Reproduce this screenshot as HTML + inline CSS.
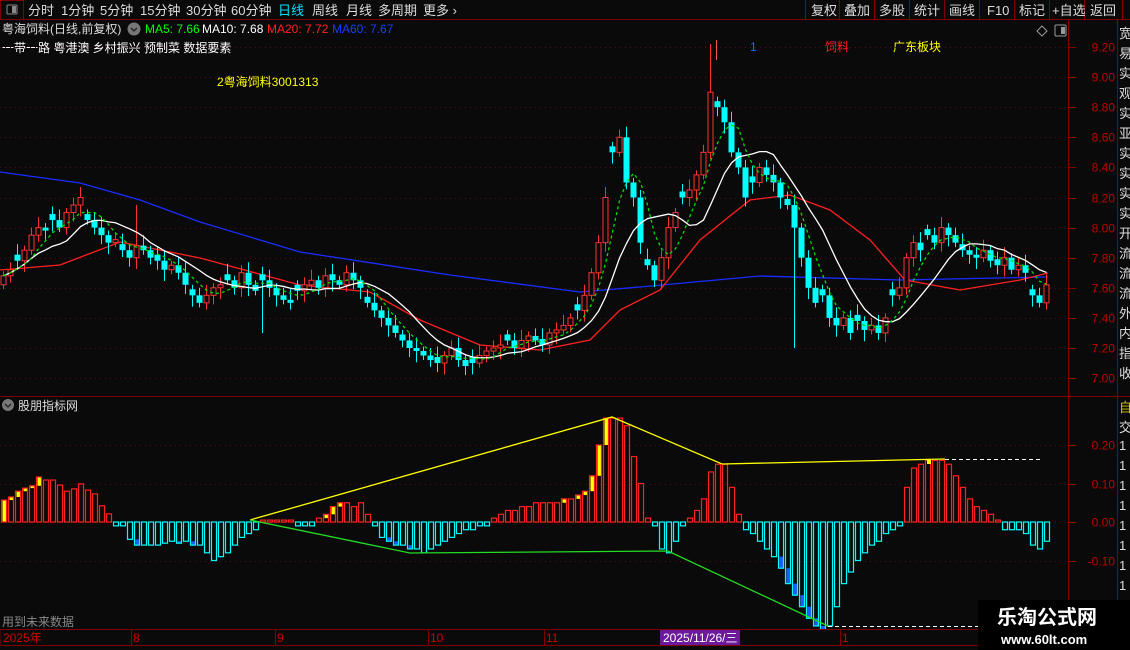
<!DOCTYPE html>
<html><head><meta charset="utf-8"><style>
html,body{margin:0;padding:0;background:#0a0a0a;width:1130px;height:650px;overflow:hidden}
svg{display:block}
text{font-family:"Liberation Sans","Noto Sans CJK SC",sans-serif}
</style></head><body>
<svg id="s" width="1130" height="650" xmlns="http://www.w3.org/2000/svg">
<rect width="1130" height="650" fill="#0a0a0a"/>
<line x1="0" y1="19.5" x2="1130" y2="19.5" stroke="#800000"/>
<rect x="0.5" y="0.5" width="23" height="19" fill="none" stroke="#800000"/>
<rect x="7" y="5" width="10" height="9" fill="none" stroke="#888" rx="1"/><rect x="12" y="6" width="4" height="7" fill="#888"/>
<g font-size="13" fill="#ddd">
<text x="28" y="15">分时</text><text x="61" y="15">1分钟</text><text x="100" y="15">5分钟</text>
<text x="140" y="15">15分钟</text><text x="186" y="15">30分钟</text><text x="231" y="15">60分钟</text>
<text x="278" y="15" fill="#00e0ff">日线</text><text x="312" y="15">周线</text><text x="346" y="15">月线</text>
<text x="378" y="15">多周期</text><text x="423" y="15">更多 ›</text>
</g>
<g stroke="#800000"><line x1="805.5" y1="0" x2="805.5" y2="20"/><line x1="839.5" y1="0" x2="839.5" y2="20"/><line x1="874.5" y1="0" x2="874.5" y2="20"/><line x1="909.5" y1="0" x2="909.5" y2="20"/><line x1="944.5" y1="0" x2="944.5" y2="20"/><line x1="979.5" y1="0" x2="979.5" y2="20"/><line x1="1014.5" y1="0" x2="1014.5" y2="20"/><line x1="1049.5" y1="0" x2="1049.5" y2="20"/><line x1="1084.5" y1="0" x2="1084.5" y2="20"/><line x1="1122.5" y1="0" x2="1122.5" y2="20"/></g>
<g font-size="13" fill="#ddd"><text x="811" y="15">复权</text><text x="844" y="15">叠加</text><text x="879" y="15">多股</text><text x="914" y="15">统计</text><text x="949" y="15">画线</text><text x="987" y="15">F10</text><text x="1019" y="15">标记</text><text x="1052" y="15">+自选</text><text x="1090" y="15">返回</text></g>
<g font-size="12"><text x="2" y="33" fill="#ddd">粤海饲料(日线,前复权)</text>
<circle cx="134" cy="29" r="6.5" fill="#777"/><path d="M131 28l3 3 3-3" stroke="#222" fill="none" stroke-width="1.3"/>
<text x="145" y="33" fill="#00ff00">MA5: 7.66</text><text x="202" y="33" fill="#fff">MA10: 7.68</text>
<text x="267" y="33" fill="#ff2020">MA20: 7.72</text><text x="332" y="33" fill="#1a3cff">MA60: 7.67</text>
<text x="2" y="52" fill="#fff">一带一路 粤港澳 乡村振兴 预制菜 数据要素</text>
<text x="217" y="86" fill="#ffff00">2粤海饲料3001313</text>
<text x="750" y="51" fill="#1a6cff">1</text><text x="825" y="51" fill="#ff2020">饲料</text><text x="893" y="51" fill="#ffff00">广东板块</text></g>
<line x1="716.5" y1="40" x2="716.5" y2="60" stroke="#ff5050"/>
<path d="M1042 26l5 5-5 5-5-5z" fill="none" stroke="#999"/>
<rect x="1055" y="25" width="11" height="11" fill="none" stroke="#999" rx="1"/><rect x="1061" y="27" width="4" height="7" fill="#999"/>
<line x1="1068.5" y1="20" x2="1068.5" y2="629" stroke="#800000"/>
<line x1="1117.5" y1="20" x2="1117.5" y2="629" stroke="#800000"/>
<line x1="0" y1="396.5" x2="1130" y2="396.5" stroke="#800000"/>
<g id="g"></g>
<circle cx="8" cy="405" r="6" fill="#777"/><path d="M5 404l3 3 3-3" stroke="#222" fill="none" stroke-width="1.3"/>
<text x="18" y="410" font-size="12" fill="#ddd">股朋指标网</text>
<text x="2" y="626" font-size="12" fill="#888">用到未来数据</text>
<rect x="0" y="629.5" width="1130" height="16" fill="#0a0a0a" stroke="#800000"/>
<g font-size="12" fill="#cc0000"><text x="3" y="642">2025年</text><text x="133" y="642">8</text><text x="277" y="642">9</text><text x="430" y="642">10</text><text x="546" y="642">11</text><text x="842" y="642">1</text></g>
<g stroke="#800000"><line x1="131.5" y1="630" x2="131.5" y2="645"/><line x1="275.5" y1="630" x2="275.5" y2="645"/><line x1="428.5" y1="630" x2="428.5" y2="645"/><line x1="544.5" y1="630" x2="544.5" y2="645"/><line x1="840.5" y1="630" x2="840.5" y2="645"/></g>
<rect x="660" y="630" width="80" height="15" fill="#6a1a9a"/><text x="663" y="642" font-size="12" fill="#fff">2025/11/26/三</text>
<g font-size="13" fill="#ddd"><text x="1119" y="38">宽</text><text x="1119" y="58">易</text><text x="1119" y="78">实</text><text x="1119" y="98">观</text><text x="1119" y="118">实</text><text x="1119" y="138">亚</text><text x="1119" y="158">实</text><text x="1119" y="178">实</text><text x="1119" y="198">实</text><text x="1119" y="218">实</text><text x="1119" y="238">开</text><text x="1119" y="258">流</text><text x="1119" y="278">流</text><text x="1119" y="298">流</text><text x="1119" y="318">外</text><text x="1119" y="338">内</text><text x="1119" y="358">指</text><text x="1119" y="378">收</text>
<text x="1119" y="412" fill="#cccc00">自</text><text x="1119" y="432">交</text>
<text x="1119" y="450">1</text><text x="1119" y="470">1</text><text x="1119" y="490">1</text><text x="1119" y="510">1</text><text x="1119" y="530">1</text><text x="1119" y="550">1</text><text x="1119" y="570">1</text><text x="1119" y="590">1</text><text x="1119" y="610">1</text></g>
<rect x="978" y="600" width="152" height="50" fill="#000"/>
<text x="997" y="624" font-size="20" font-weight="bold" fill="#fff" font-family="Liberation Serif,Noto Serif CJK SC,serif">乐淘公式网</text>
<text x="1001" y="644" font-size="13" font-weight="bold" fill="#fff" font-family="Liberation Serif,serif">www.60lt.com</text>
</svg>
<script>
var NS="http://www.w3.org/2000/svg",g=document.getElementById("g");
function el(t,a){var e=document.createElementNS(NS,t);for(var k in a)e.setAttribute(k,a[k]);g.appendChild(e);return e}
function py(p){return 47+(9.2-p)*150.5}
function hy(v){return 522-v*385}
var labs=[9.2,9,8.8,8.6,8.4,8.2,8,7.8,7.6,7.4,7.2,7];
labs.forEach(function(p){var y=Math.round(py(p))+.5;el("line",{x1:0,y1:y,x2:1068,y2:y,stroke:"#5a1010","stroke-dasharray":"1 4"});el("line",{x1:1068,y1:y,x2:1076,y2:y,stroke:"#800000"});
var t=el("text",{x:1115,y:y+4,"font-size":12,fill:"#c00000","text-anchor":"end"});t.textContent=p.toFixed(2);});
[[0.2,"0.20"],[0.1,"0.10"],[0,"0.00"],[-0.1,"-0.10"]].forEach(function(a){var y=Math.round(hy(a[0]))+.5;el("line",{x1:0,y1:y,x2:1068,y2:y,stroke:"#5a1010","stroke-dasharray":"1 4"});el("line",{x1:1068,y1:y,x2:1076,y2:y,stroke:"#800000"});var t=el("text",{x:1115,y:y+4,"font-size":12,fill:"#c00000","text-anchor":"end"});t.textContent=a[1];});
var c=[7.68,7.72,7.78,7.85, 7.95,8.0,7.98,8.05,8.0,8.1,8.15,8.2, 8.05,8.0,7.95,7.9,7.92,7.85,7.8,7.88, 7.85,7.8,7.78,7.72,7.75,7.7,7.62,7.55,7.5,
7.55,7.6,7.62,7.65,7.6,7.7,7.62,7.58,7.65,7.6,7.55,7.52,7.5,7.58, 7.62,7.65,7.6,7.68,7.65,7.62,7.7,7.65,7.6, 7.5,7.45,7.4,7.35,7.3,7.25,7.2,7.18,7.15,
7.12,7.1,7.15,7.2,7.12,7.08,7.1,7.15,7.18,7.2, 7.22,7.25,7.2,7.25,7.28,7.25,7.22,7.3,7.32,7.35,7.4,7.45, 7.55,7.7,7.9,8.2,8.5,8.6,8.3,8.2,
7.9,7.75,7.65,7.8,8.0,8.1,8.2,8.25, 8.35,8.5,8.9,8.8,8.7,8.5,8.4, 8.2,8.3,8.4,8.35,8.3,8.2,8.15, 8.0,7.8,7.6,7.5,7.55,7.4,7.35,7.4,
7.3,7.38,7.32,7.35,7.3,7.4,7.55,7.6, 7.8,7.9,7.85,7.95,7.9,8.0,7.95,7.9, 7.85,7.82,7.8,7.85,7.78,7.75,7.8,7.72,7.75,7.7,7.55,7.5,7.62];
function poly(pts,col,dash){el("polyline",{points:pts.map(function(p){return p.join(",")}).join(" "),fill:"none",stroke:col,"stroke-width":1.3,"stroke-dasharray":dash||"none"})}
poly([[0,172],[80,183],[140,200],[200,222],[300,252],[450,275],[580,292],[640,287],[760,276],[900,280],[1048,277]],"#1a2cff");
poly([[0,270],[60,265],[120,242],[200,258],[300,285],[370,292],[420,320],[480,345],[540,350],[590,340],[620,310],[660,290],[700,240],[750,200],[790,195],[830,210],[870,240],[905,280],[960,290],[1020,280],[1048,273]],"#ff2020");
function ma(n){var pts=[];for(var i=0;i<c.length;i++){var s=0,k=0;for(var j=Math.max(0,i-n+1);j<=i;j++){s+=c[j];k++}pts.push([3.5+7*i,py(s/k)])}return pts}
for(var i=0;i<c.length;i++){
 var o=i?c[i-1]:7.62,cl=c[i];if(i%5==2)o=cl+0.04;
 var up=cl>=o,hi=Math.max(o,cl)+0.03+(i%3)*0.02,lo=Math.min(o,cl)-0.03-(i%4)*0.015;
 if(i==101)hi=9.22; if(i==19)hi=8.15; if(i==37)lo=7.3; if(i==113)lo=7.2;
 var x=3.5+7*i,col=up?"#ff3232":"#00ffff";
 el("line",{x1:x,y1:py(hi),x2:x,y2:py(lo),stroke:col});
 var yt=py(Math.max(o,cl)),yb=py(Math.min(o,cl));if(yb-yt<1)yb=yt+1;
 if(up)el("rect",{x:x-2.5,y:yt,width:5,height:yb-yt,fill:"#0a0a0a",stroke:col});
 else el("rect",{x:x-3,y:yt,width:6,height:yb-yt,fill:col});
}
poly(ma(10),"#ffffff");poly(ma(5),"#00dd00","3 3");
var h=[.057,.065,.08,.088,.094,.117,.109,.109,.096,.08,.086,.099,.083,.073,.042,.021,
-.01,-.01,-.045,-.06,-.06,-.06,-.06,-.055,-.05,-.055,-.05,-.06,-.06,-.08,-.1,-.09,-.08,-.06,-.04,-.03,-.02,
.005,.005,.005,.005,.005,-.01,-.01,-.01,.01,.02,.04,.05,.05,.04,.05,.02,
-.01,-.04,-.05,-.06,-.06,-.07,-.07,-.08,-.07,-.06,-.05,-.04,-.03,-.02,-.02,-.01,-.01,
.01,.02,.03,.03,.04,.04,.05,.05,.05,.05,.06,.06,.07,.08,
.12,.2,.27,.27,.27,.25,.17,.1,.01, -.01,-.07,-.08,-.05,-.01, .01,.03,.06,.13,.15,.15,.09,.02,
-.02,-.03,-.05,-.07,-.09,-.12,-.16,-.19,-.22,-.25,-.27,-.28,-.27,-.22,-.16,
-.13,-.1,-.08,-.06,-.05,-.03,-.02,-.01, .09,.14,.15,.16,.16,.16,.15,.12,.09,.06,.04, .03,.02,.005,
-.02,-.02,-.02,-.03,-.06,-.07,-.05];
for(var i=0;i<h.length;i++){var v=h[i],p=i?h[i-1]:0,x=1.5+7*i;
 if(v>=0){if(v>p&&p>=0&&(i<6||(i>44&&i<50)||(i>77&&i<87)))el("rect",{x:x+1,y:hy(v),width:4,height:Math.max(1,hy(p)-hy(v)),fill:"#ffff00"});
  el("rect",{x:x,y:hy(v),width:5,height:Math.max(1,hy(0)-hy(v)),fill:"none",stroke:"#ff2020","stroke-width":1.2});}
 else{if(v<p&&p<=0&&((i>18&&i<29)||(i>54&&i<59)||(i>110&&i<118)))el("rect",{x:x+1,y:hy(p),width:4,height:hy(v)-hy(p),fill:"#1a5cff"});
  el("rect",{x:x,y:hy(0),width:5,height:hy(v)-hy(0),fill:"none",stroke:"#00ffff","stroke-width":1.2});}
}
poly([[250,520],[612,417],[722,464],[945,459]],"#ffff00");
poly([[250,520],[410,553],[668,551],[828,626]],"#22dd22");
el("line",{x1:945,y1:459.5,x2:1042,y2:459.5,stroke:"#fff","stroke-dasharray":"4 3"});
el("line",{x1:828,y1:626.5,x2:1042,y2:626.5,stroke:"#fff","stroke-dasharray":"4 3"});
el("rect",{x:927,y:460,width:4,height:4,fill:"#ffff00"});
</script>
</body></html>
